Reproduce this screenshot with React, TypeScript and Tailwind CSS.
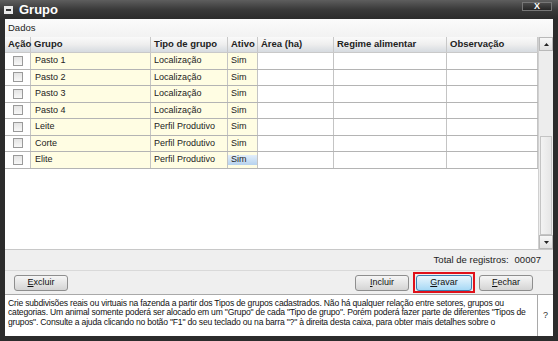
import React from 'react';

const cols = [
  { label: 'Ação', w: 'w-[26px]' },
  { label: 'Grupo', w: 'w-[120px]' },
  { label: 'Tipo de grupo', w: 'w-[77px]' },
  { label: 'Ativo', w: 'w-[30px]' },
  { label: 'Área (ha)', w: 'w-[76px]' },
  { label: 'Regime alimentar', w: 'w-[113px]' },
  { label: 'Observação', w: 'flex-1' },
];

const rows = [
  { grupo: 'Pasto 1', tipo: 'Localização' },
  { grupo: 'Pasto 2', tipo: 'Localização' },
  { grupo: 'Pasto 3', tipo: 'Localização' },
  { grupo: 'Pasto 4', tipo: 'Localização' },
  { grupo: 'Leite', tipo: 'Perfil Produtivo' },
  { grupo: 'Corte', tipo: 'Perfil Produtivo' },
  { grupo: 'Elite', tipo: 'Perfil Produtivo' },
];

const font = { fontFamily: '"Liberation Sans", Arial, sans-serif' };

function Checkbox() {
  return (
    <div className="w-[10px] h-[10px] border border-[#9a9a9a] bg-gradient-to-b from-[#e4e4e4] to-[#f8f8f8]" />
  );
}

function Button({ children, accent }: { children: React.ReactNode; accent?: boolean }) {
  return (
    <button
      className={`h-[16px] rounded-[3px] border text-[9px] text-[#111] flex items-center justify-center ${
        accent
          ? 'w-[56px] border-[#3c7fb1] bg-gradient-to-b from-[#eaf6fd] to-[#a7d9f5]'
          : 'w-[54px] border-[#8e8e8e] bg-gradient-to-b from-[#f6f6f6] to-[#d4d4d4]'
      }`}
    >
      {children}
    </button>
  );
}

export default function App() {
  return (
    <div
      className="w-[558px] h-[341px] bg-[#2c2c2c] flex flex-col pl-[5px] pr-[5px] pb-[5px] overflow-hidden"
      style={font}
    >
      {/* Title bar */}
      <div className="h-[19px] -ml-[5px] -mr-[5px] flex items-center bg-gradient-to-b from-[#5e5e5e] via-[#3a3a3a] to-[#2c2c2c] px-[4px]">
        <div className="w-[9px] h-[8px] bg-[#e8e8e8] flex items-center justify-center">
          <div className="w-[5px] h-[2px] bg-[#333]" />
        </div>
        <span className="ml-[6px] text-white text-[13px] font-bold leading-none">Grupo</span>
        <div className="ml-auto mr-[2px] -mt-[7px] w-[30px] h-[9px] border border-[#777] bg-gradient-to-b from-[#4a4a4a] to-[#262626] flex items-center justify-center">
          <span className="text-white text-[9px] font-bold leading-none">X</span>
        </div>
      </div>

      {/* Body */}
      <div className="flex-1 bg-[#efefef] flex flex-col">
        <div className="h-[18px] flex items-center pl-[3px] bg-gradient-to-b from-[#fbfbfb] to-[#f2f2f2] text-[9.5px] text-[#222]">
          Dados
        </div>

        {/* Grid */}
        <div className="h-[212px] flex bg-white">
          <div className="flex-1 flex flex-col">
            <div className="h-[16px] flex bg-gradient-to-b from-[#fafafa] via-[#eeeeee] to-[#d6dbe0] border-b border-[#c9c9c9]">
              {cols.map((c) => (
                <div
                  key={c.label}
                  className={`${c.w} border-r border-[#c8c8c8] pl-[3px] flex items-center text-[9.5px] font-bold text-[#222] whitespace-nowrap`}
                >
                  {c.label}
                </div>
              ))}
            </div>
            {rows.map((r, i) => (
              <div key={r.grupo} className="h-[16.5px] flex border-b border-[#b4b4b4] text-[9px] text-[#222]">
                <div className="w-[26px] border-r border-[#c4c4c4] flex items-center justify-center">
                  <Checkbox />
                </div>
                <div className="w-[120px] border-r border-[#c4c4c4] bg-[#fffde3] pl-[4px] flex items-center">{r.grupo}</div>
                <div className="w-[77px] border-r border-[#c4c4c4] bg-[#fffde3] pl-[3px] flex items-center">{r.tipo}</div>
                <div className="w-[30px] border-r border-[#c4c4c4] bg-[#fffde3] flex items-center">
                  {i === rows.length - 1 ? (
                    <div className="w-full h-[10px] bg-gradient-to-b from-[#e2eefa] to-[#b6d2ee] pl-[3px] flex items-center">Sim</div>
                  ) : (
                    <span className="pl-[3px]">Sim</span>
                  )}
                </div>
                <div className="w-[76px] border-r border-[#c4c4c4]" />
                <div className="w-[113px] border-r border-[#c4c4c4]" />
                <div className="flex-1 border-r border-[#c4c4c4]" />
              </div>
            ))}
          </div>

          {/* Scrollbar */}
          <div className="w-[15px] bg-[#ededed] border-l border-[#d0d0d0] flex flex-col">
            <div className="h-[14px] border border-[#b9b9b9] bg-gradient-to-b from-[#f7f7f7] to-[#e1e1e1] flex items-center justify-center">
              <svg width="5" height="3" viewBox="0 0 5 3"><path d="M0 3 L2.5 0 L5 3 Z" fill="#222" /></svg>
            </div>
            <div className="h-[85px]" />
            <div className="flex-1 mx-[1px] border border-[#c4c4c4] bg-gradient-to-r from-[#f3f3f3] to-[#e6e6e6]" />
            <div className="h-[14px] border border-[#b9b9b9] bg-gradient-to-b from-[#f7f7f7] to-[#e1e1e1] flex items-center justify-center">
              <svg width="5" height="3" viewBox="0 0 5 3"><path d="M0 0 L5 0 L2.5 3 Z" fill="#222" /></svg>
            </div>
          </div>
        </div>

        {/* Total */}
        <div className="h-[22px] border-t border-[#c8c8c8] border-b border-b-[#d9d9d9] flex items-center justify-end pr-[12px] text-[9.5px] text-[#222]">
          <span>Total de registros:</span>
          <span className="ml-[6px]">00007</span>
        </div>

        {/* Buttons */}
        <div className="h-[23px] flex items-center pl-[9px] pr-[20px]">
          <Button>
            <u>E</u>xcluir
          </Button>
          <div className="flex-1" />
          <Button>
            <u>I</u>ncluir
          </Button>
          <div className="ml-[4px] border-2 border-[#e0101a] p-[1px] w-[62px] h-[21px] flex">
            <Button accent>
              <u>G</u>ravar
            </Button>
          </div>
          <div className="ml-[4px] flex items-center">
            <Button>
              <u>F</u>echar
            </Button>
          </div>
        </div>

        {/* Description */}
        <div className="flex-1 flex border-t border-[#a9a9a9]">
          <div className="flex-1 bg-white border-r border-[#a9a9a9] px-[3px] pt-[4px] text-[8.6px] leading-[9.3px] tracking-[-0.2px] text-[#111] whitespace-nowrap overflow-hidden">
            Crie subdivisões reais ou virtuais na fazenda a partir dos Tipos de grupos cadastrados. Não há qualquer relação entre setores, grupos ou
            <br />
            categorias. Um animal somente poderá ser alocado em um "Grupo" de cada "Tipo de grupo". Porém poderá fazer parte de diferentes "Tipos de
            <br />
            grupos". Consulte a ajuda clicando no botão "F1" do seu teclado ou na barra "?" à direita desta caixa, para obter mais detalhes sobre o
          </div>
          <div className="w-[15px] bg-white flex items-center justify-center text-[9px] text-[#333]">?</div>
        </div>
      </div>
    </div>
  );
}
